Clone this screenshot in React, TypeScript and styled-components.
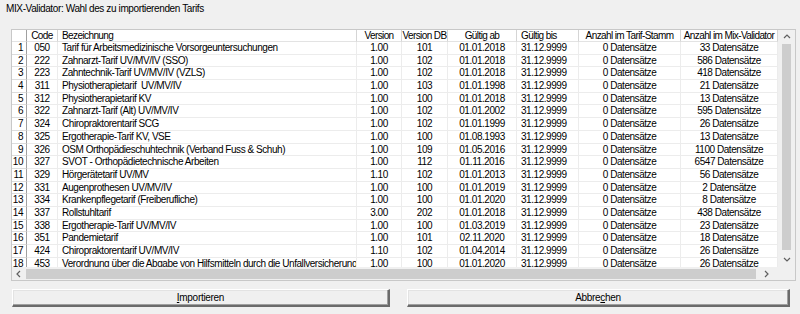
import React from 'react';
import styled, { createGlobalStyle } from 'styled-components';

const GlobalStyle = createGlobalStyle`
  html, body {
    margin: 0;
    padding: 0;
    background: #f0f0f0;
  }
  body {
    font-family: 'Liberation Sans', Arial, sans-serif;
    font-size: 10px;
    letter-spacing: -0.45px;
    color: #000;
  }
`;

type Align = 'left' | 'center' | 'right';

type Column = {
  key: string;
  label: string;
  width: number;
  align: Align;
};

const COLUMNS: Column[] = [
  { key: 'code', label: 'Code', width: 31, align: 'center' },
  { key: 'name', label: 'Bezeichnung', width: 299, align: 'left' },
  { key: 'version', label: 'Version', width: 45, align: 'center' },
  { key: 'versionDb', label: 'Version DB', width: 46, align: 'center' },
  { key: 'validFrom', label: 'Gültig ab', width: 69, align: 'center' },
  { key: 'validTo', label: 'Gültig bis', width: 62, align: 'left' },
  { key: 'inStamm', label: 'Anzahl im Tarif-Stamm', width: 102, align: 'center' },
  { key: 'inMix', label: 'Anzahl im Mix-Validator', width: 97, align: 'center' },
];

type Tarif = {
  code: string;
  name: string;
  version: string;
  versionDb: string;
  validFrom: string;
  mix: number;
};

const TARIFS: Tarif[] = [
  { code: '050', name: 'Tarif für Arbeitsmedizinische Vorsorgeuntersuchungen', version: '1.00', versionDb: '101', validFrom: '01.01.2018', mix: 33 },
  { code: '222', name: 'Zahnarzt-Tarif UV/MV/IV (SSO)', version: '1.00', versionDb: '102', validFrom: '01.01.2018', mix: 586 },
  { code: '223', name: 'Zahntechnik-Tarif UV/MV/IV (VZLS)', version: '1.00', versionDb: '102', validFrom: '01.01.2018', mix: 418 },
  { code: '311', name: 'Physiotherapietarif  UV/MV/IV', version: '1.00', versionDb: '103', validFrom: '01.01.1998', mix: 21 },
  { code: '312', name: 'Physiotherapietarif KV', version: '1.00', versionDb: '100', validFrom: '01.01.2018', mix: 13 },
  { code: '322', name: 'Zahnarzt-Tarif (Alt) UV/MV/IV', version: '1.00', versionDb: '102', validFrom: '01.01.2002', mix: 595 },
  { code: '324', name: 'Chiropraktorentarif SCG', version: '1.00', versionDb: '102', validFrom: '01.01.1999', mix: 26 },
  { code: '325', name: 'Ergotherapie-Tarif KV, VSE', version: '1.00', versionDb: '100', validFrom: '01.08.1993', mix: 13 },
  { code: '326', name: 'OSM Orthopädieschuhtechnik (Verband Fuss & Schuh)', version: '1.00', versionDb: '109', validFrom: '01.05.2016', mix: 1100 },
  { code: '327', name: 'SVOT - Orthopädietechnische Arbeiten', version: '1.00', versionDb: '112', validFrom: '01.11.2016', mix: 6547 },
  { code: '329', name: 'Hörgerätetarif UV/MV', version: '1.10', versionDb: '102', validFrom: '01.01.2013', mix: 56 },
  { code: '331', name: 'Augenprothesen UV/MV/IV', version: '1.00', versionDb: '100', validFrom: '01.01.2019', mix: 2 },
  { code: '334', name: 'Krankenpflegetarif (Freiberufliche)', version: '1.00', versionDb: '100', validFrom: '01.01.2020', mix: 8 },
  { code: '337', name: 'Rollstuhltarif', version: '3.00', versionDb: '202', validFrom: '01.01.2018', mix: 438 },
  { code: '338', name: 'Ergotherapie-Tarif UV/MV/IV', version: '1.00', versionDb: '100', validFrom: '01.03.2019', mix: 23 },
  { code: '351', name: 'Pandemietarif', version: '1.00', versionDb: '101', validFrom: '02.11.2020', mix: 18 },
  { code: '424', name: 'Chiropraktorentarif UV/MV/IV', version: '1.10', versionDb: '102', validFrom: '01.04.2014', mix: 26 },
  { code: '453', name: 'Verordnung über die Abgabe von Hilfsmitteln durch die Unfallversicherung', version: '1.00', versionDb: '100', validFrom: '01.01.2020', mix: 26 },
];

const ROW_HEIGHT = 12.7;

const Window = styled.div`
  width: 800px;
  height: 314px;
  display: flex;
  flex-direction: column;
  box-sizing: border-box;
  padding-top: 2px;
`;

const Title = styled.div`
  font-size: 10px;
  letter-spacing: -0.38px;
  line-height: 13px;
  height: 13px;
  padding-left: 6px;
  margin-bottom: 14px;
  white-space: nowrap;
`;

const GridFrame = styled.div`
  display: flex;
  margin: 0 4px 0 11px;
  border: 1px solid #c8c8c8;
  background: #fff;
  height: 252px;
  box-sizing: border-box;
`;

const TableArea = styled.div`
  flex: 1;
  min-width: 0;
  display: flex;
  flex-direction: column;
`;

const HeaderRow = styled.div`
  display: flex;
  height: 12px;
  flex: none;
`;

const HeaderCell = styled.div<{ $width: number; $align: Align }>`
  width: ${({ $width }) => $width}px;
  flex: none;
  box-sizing: border-box;
  border-right: 1px solid #d5d5d5;
  border-bottom: 1px solid #e3e3e3;
  line-height: 12px;
  letter-spacing: -0.6px;
  text-align: ${({ $align }) => $align};
  padding: ${({ $align }) => ($align === 'left' ? '0 0 0 4px' : '0')};
  white-space: nowrap;
  overflow: hidden;
`;

const CornerCell = styled(HeaderCell)`
  border-right: 1px solid #a0a0a0;
`;

const Body = styled.div`
  height: 225px;
  overflow: hidden;
  flex: none;
`;

const Row = styled.div`
  display: flex;
  height: ${ROW_HEIGHT}px;
`;

const RowNumber = styled.div`
  width: 15px;
  flex: none;
  box-sizing: border-box;
  border-right: 1px solid #a0a0a0;
  border-bottom: 1px solid #dcdcdc;
  line-height: ${ROW_HEIGHT - 1}px;
  text-align: right;
  padding-right: 3px;
`;

const Cell = styled.div<{ $width: number; $align: Align }>`
  width: ${({ $width }) => $width}px;
  flex: none;
  box-sizing: border-box;
  border-right: 1px solid #ececec;
  border-bottom: 1px solid #ececec;
  line-height: ${ROW_HEIGHT - 1}px;
  text-align: ${({ $align }) => $align};
  padding: ${({ $align }) => ($align === 'left' ? '0 0 0 4px' : '0')};
  white-space: pre;
  overflow: hidden;
`;

const HScroll = styled.div`
  display: flex;
  align-items: center;
  height: 13px;
  background: #f0f0f0;
  flex: none;
`;

const ArrowBox = styled.div<{ $w: number; $h: number }>`
  width: ${({ $w }) => $w}px;
  height: ${({ $h }) => $h}px;
  flex: none;
  display: flex;
  align-items: center;
  justify-content: center;
`;

const HThumb = styled.div`
  flex: 1;
  height: 10px;
  background: #cdcdcd;
`;

const VScroll = styled.div`
  width: 17px;
  flex: none;
  display: flex;
  flex-direction: column;
  background: #f0f0f0;
`;

const VTrack = styled.div`
  flex: 1;
  display: flex;
  flex-direction: column;
  align-items: center;
  padding-bottom: 3px;
`;

const VThumb = styled.div`
  width: 9px;
  height: 206px;
  background: #cdcdcd;
`;

const Corner = styled.div`
  height: 13px;
  flex: none;
`;

const ButtonRow = styled.div`
  display: grid;
  grid-template-columns: 378px 383px;
  column-gap: 17px;
  padding-left: 12px;
  margin-top: 8px;
`;

const Button = styled.button`
  height: 18px;
  box-sizing: border-box;
  background: #f0f0f0;
  border-style: solid;
  border-width: 1px 2px 2px 1px;
  border-color: #ffffff #6b6b6b #6b6b6b #ffffff;
  box-shadow: inset -1px -1px 0 #a0a0a0, inset 1px 1px 0 #e3e3e3;
  font-family: inherit;
  font-size: 10px;
  letter-spacing: -0.3px;
  color: #000;
  padding: 0;
  line-height: 14px;
`;

type ChevronProps = { dir: 'up' | 'down' | 'left' | 'right' };

const CHEVRONS: Record<ChevronProps['dir'], string> = {
  up: '1,5 4,2 7,5',
  down: '1,2 4,5 7,2',
  left: '5,1 2,4 5,7',
  right: '2,1 5,4 2,7',
};

const Chevron = ({ dir }: ChevronProps) => (
  <svg width="8" height="8" viewBox="0 0 8 8">
    <polyline points={CHEVRONS[dir]} fill="none" stroke="#606060" strokeWidth="1.2" />
  </svg>
);

const cellValue = (t: Tarif, key: string) => {
  switch (key) {
    case 'code':
      return t.code;
    case 'name':
      return t.name;
    case 'version':
      return t.version;
    case 'versionDb':
      return t.versionDb;
    case 'validFrom':
      return t.validFrom;
    case 'validTo':
      return '31.12.9999';
    case 'inStamm':
      return '0 Datensätze';
    default:
      return `${t.mix} Datensätze`;
  }
};

export default function App() {
  return (
    <>
      <GlobalStyle />
      <Window>
        <Title>MIX-Validator: Wahl des zu importierenden Tarifs</Title>
        <GridFrame>
          <TableArea>
            <HeaderRow>
              <CornerCell $width={15} $align="center" />
              {COLUMNS.map((col) => (
                <HeaderCell key={col.key} $width={col.width} $align={col.align}>
                  {col.label}
                </HeaderCell>
              ))}
            </HeaderRow>
            <Body>
              {TARIFS.map((t, i) => (
                <Row key={t.code}>
                  <RowNumber>{i + 1}</RowNumber>
                  {COLUMNS.map((col) => (
                    <Cell key={col.key} $width={col.width} $align={col.align}>
                      {cellValue(t, col.key)}
                    </Cell>
                  ))}
                </Row>
              ))}
            </Body>
            <HScroll>
              <ArrowBox $w={14} $h={13}>
                <Chevron dir="left" />
              </ArrowBox>
              <HThumb />
              <ArrowBox $w={22} $h={13}>
                <Chevron dir="right" />
              </ArrowBox>
            </HScroll>
          </TableArea>
          <VScroll>
            <ArrowBox $w={17} $h={14}>
              <Chevron dir="up" />
            </ArrowBox>
            <VTrack>
              <VThumb />
            </VTrack>
            <ArrowBox $w={17} $h={14}>
              <Chevron dir="down" />
            </ArrowBox>
            <Corner />
          </VScroll>
        </GridFrame>
        <ButtonRow>
          <Button>
            <u>I</u>mportieren
          </Button>
          <Button>
            Abbre<u>c</u>hen
          </Button>
        </ButtonRow>
      </Window>
    </>
  );
}
